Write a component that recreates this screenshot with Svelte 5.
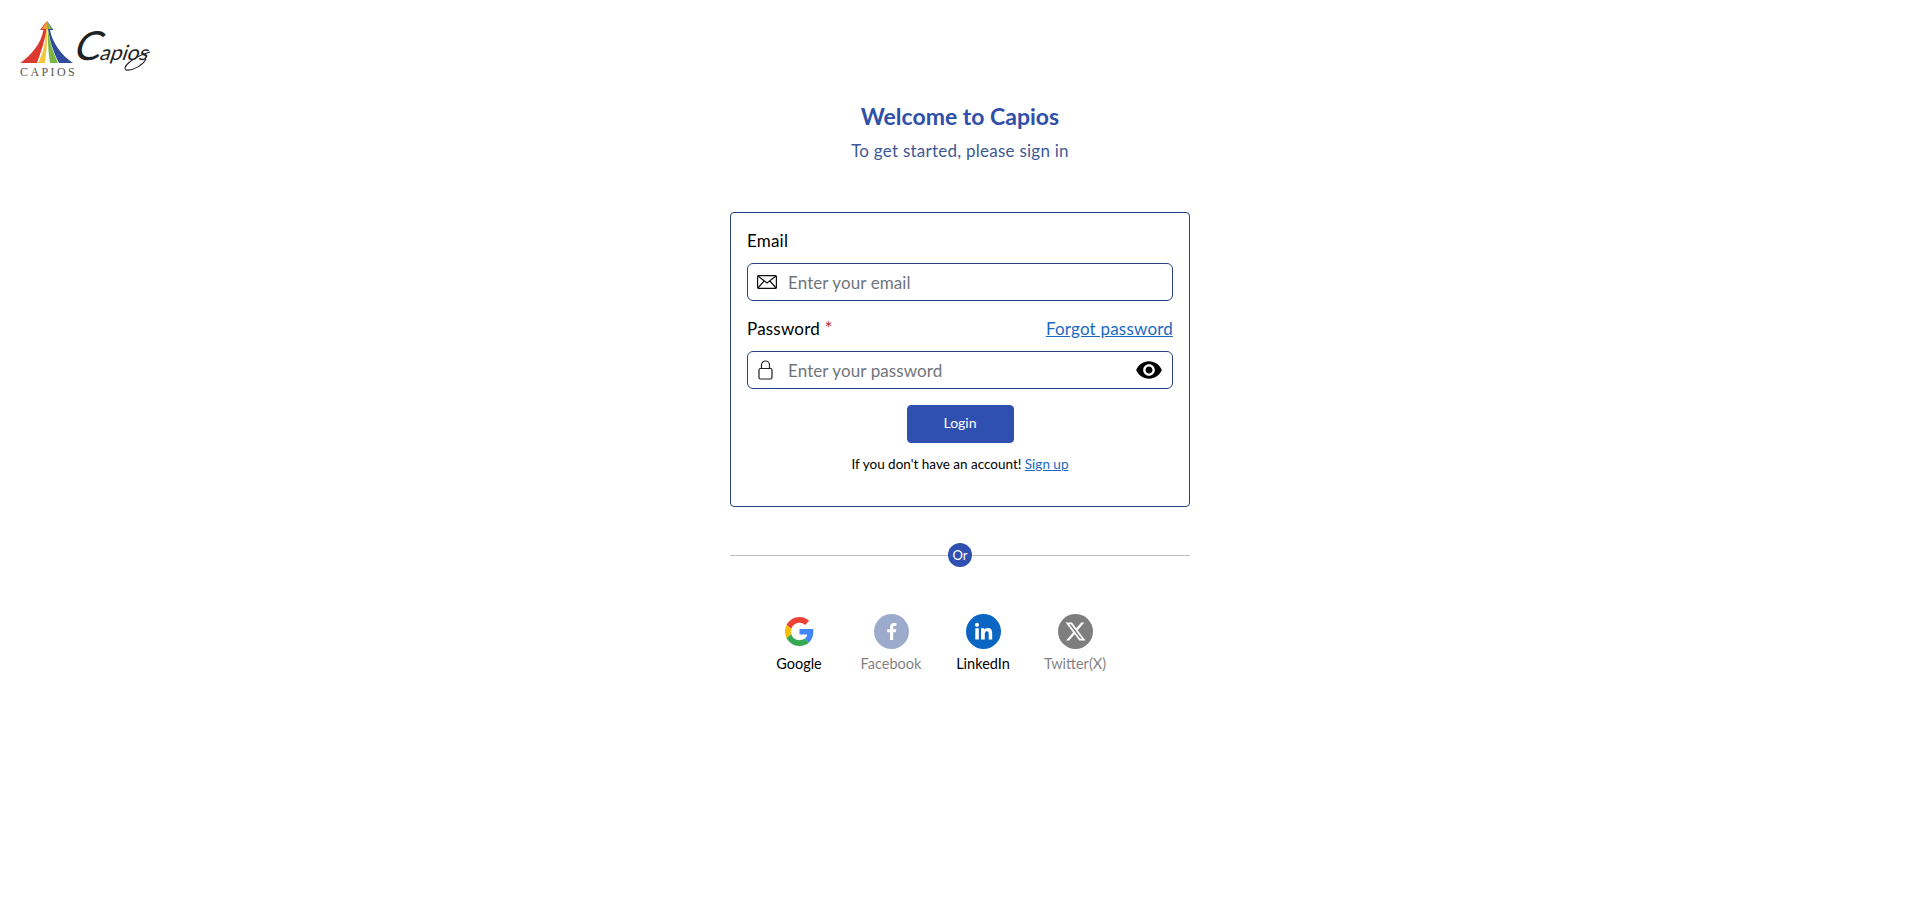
<script>
  const socials = [
    { name: 'Google', off: false },
    { name: 'Facebook', off: true },
    { name: 'LinkedIn', off: false },
    { name: 'Twitter(X)', off: true }
  ];
</script>

<div class="page">
  <header class="top">
    <svg class="logo" width="140" height="60" viewBox="0 0 140 60" aria-label="Capios">
      <path d="M29 1l6.500 9H32c2 12 11 25 23 33H41C35 32 31 18 29.500 6z" fill="#2f4b9c" />
      <path d="M29.500 6c.5 14 .5 26 2.500 37h8C35 32 31 20 29.500 6z" fill="#7db547" />
      <path d="M28 2l-6 8h3.500C23 24 13 35 2.500 43H19c4-11 8-23 9.500-33z" fill="#dc3a2e" />
      <path d="M28.500 8C28 22 25 34 20 43h7c1.500-11 2.500-23 2-35z" fill="#f5c63c" />
      <path d="M29 1l-5 8h5z" fill="#f0a030" />
      <path d="M29 1v8h5z" fill="#8fb544" />
      <text x="2" y="56" class="mark">CAPIOS</text>
      <g transform="translate(54 40) skewX(-18)">
        <text class="script"><tspan class="cap">C</tspan>apios</text>
      </g>
      <path d="M128 39c-3 6-13 12-20 11-4-2 4-12 24-18" fill="none" stroke="#222" stroke-width="1.100" />
    </svg>
  </header>

  <main class="main">
    <h1>Welcome to Capios</h1>
    <p class="sub">To get started, please sign in</p>

    <form class="card" onsubmit={(e) => e.preventDefault()}>
      <label class="label" for="email">Email</label>
      <div class="field">
        <svg class="ico" width="20" height="14" viewBox="0 0 20 14" fill="none" stroke="#111" stroke-width="1.200">
          <rect x=".6" y=".6" width="18.800" height="12.800" rx="1" />
          <path d="M1 1l9 7 9-7M1 13l6.500-7.500M19 13l-6.500-7.500" />
        </svg>
        <input id="email" type="email" placeholder="Enter your email" />
      </div>

      <div class="row">
        <label class="label" for="pw">Password <span class="req">*</span></label>
        <a href="#forgot" class="link">Forgot password</a>
      </div>
      <div class="field">
        <svg class="ico lock" width="15" height="20" viewBox="0 0 15 20" fill="none" stroke="#222" stroke-width="1.200">
          <rect x="1" y="8.500" width="13" height="10.500" rx="1.500" />
          <path d="M3.500 8.500V5a4 4 0 0 1 8 0v3.500" />
        </svg>
        <input id="pw" type="password" placeholder="Enter your password" />
        <svg class="eye" width="28" height="28" viewBox="0 0 24 24" fill="#000">
          <path d="M12 4.500C7 4.500 2.730 7.610 1 12c1.730 4.390 6 7.500 11 7.500s9.270-3.110 11-7.500c-1.730-4.390-6-7.500-11-7.500zM12 17c-2.760 0-5-2.240-5-5s2.240-5 5-5 5 2.240 5 5-2.240 5-5 5zm0-8c-1.660 0-3 1.340-3 3s1.340 3 3 3 3-1.340 3-3-1.340-3-3-3z" />
        </svg>
      </div>

      <button class="btn" type="submit">Login</button>
      <p class="signup">If you don't have an account! <a href="#signup" class="link">Sign up</a></p>
    </form>

    <div class="or"><span>Or</span></div>

    <div class="socials">
      {#each socials as s}
        <div class="social" class:off={s.off}>
          <span class="badge">
            {#if s.name === 'Google'}
              <svg width="29" height="29" viewBox="0 0 48 48">
                <path fill="#EA4335" d="M24 9.500c3.540 0 6.710 1.220 9.210 3.600l6.850-6.850C35.900 2.380 30.470 0 24 0 14.620 0 6.510 5.380 2.560 13.220l7.980 6.190C12.430 13.720 17.740 9.500 24 9.500z" />
                <path fill="#4285F4" d="M46.980 24.550c0-1.570-.15-3.090-.38-4.550H24v9.020h12.940c-.58 2.960-2.260 5.480-4.780 7.180l7.730 6c4.510-4.180 7.090-10.360 7.090-17.650z" />
                <path fill="#FBBC05" d="M10.530 28.590c-.48-1.450-.76-2.990-.76-4.590s.27-3.140.76-4.590l-7.980-6.190C.92 16.460 0 20.120 0 24c0 3.880.92 7.540 2.560 10.780l7.970-6.190z" />
                <path fill="#34A853" d="M24 48c6.480 0 11.930-2.130 15.890-5.810l-7.730-6c-2.150 1.450-4.920 2.300-8.160 2.300-6.260 0-11.570-4.220-13.470-9.910l-7.980 6.190C6.510 42.620 14.620 48 24 48z" />
              </svg>
            {:else if s.name === 'Facebook'}
              <svg width="35" height="35" viewBox="0 0 35 35">
                <circle cx="17.500" cy="17.500" r="17.500" fill="#3b5998" />
                <path fill="#fff" d="M19.200 26v-7.700h2.700l.4-3h-3.100v-1.900c0-.9.300-1.500 1.500-1.500h1.700V9.200c-.3 0-1.300-.1-2.400-.1-2.400 0-4 1.400-4 4.100v2.100h-2.700v3h2.700V26z" />
              </svg>
            {:else if s.name === 'LinkedIn'}
              <svg width="35" height="35" viewBox="0 0 35 35">
                <circle cx="17.500" cy="17.500" r="17.500" fill="#0a66c2" />
                <path fill="#fff" d="M9.300 14.200h3.500V25.500H9.300zM11 8.800a2 2 0 1 1 0 4.100 2 2 0 0 1 0-4.100zM15 14.200h3.300v1.600c.5-.9 1.700-1.900 3.500-1.900 3.700 0 4.400 2.400 4.400 5.600v6h-3.500v-5.300c0-1.300 0-2.900-1.800-2.900s-2.100 1.400-2.100 2.800v5.400H15z" />
              </svg>
            {:else}
              <svg width="35" height="35" viewBox="0 0 35 35">
                <circle cx="17.500" cy="17.500" r="17.500" fill="#000" />
                <g transform="translate(6.500 6.500) scale(.92)">
                  <path fill="#fff" d="M18.244 2.250h3.308l-7.227 8.260 8.502 11.240H16.170l-5.214-6.817L4.990 21.750H1.680l7.730-8.835L1.254 2.250H8.080l4.713 6.231zm-1.161 17.520h1.833L7.084 4.126H5.117z" />
                </g>
              </svg>
            {/if}
          </span>
          <span class="name">{s.name}</span>
        </div>
      {/each}
    </div>
  </main>
</div>

<style>
  :global(body) {
    margin: 0;
    background: #fff;
    font-family: Lato, "Noto Sans", sans-serif;
  }
  .page {
    height: 905px;
    overflow: hidden;
  }
  .top {
    height: 100px;
    padding: 20px 0 0 18px;
    box-sizing: border-box;
  }
  .logo {
    display: block;
  }
  .mark {
    font: 400 12px "Liberation Serif", serif;
    letter-spacing: 2.400px;
    fill: #555;
  }
  .script {
    font: 400 21px Lato, sans-serif;
    fill: #222;
    letter-spacing: 0;
  }
  .cap {
    font-size: 40px;
  }
  .main {
    display: flex;
    flex-direction: column;
    align-items: center;
  }
  h1 {
    margin: 0;
    font-size: 23px;
    line-height: 32px;
    font-weight: 700;
    color: #2f4fa8;
  }
  .sub {
    margin: 7px 0 0;
    font-size: 17px;
    line-height: 24px;
    letter-spacing: 0.250px;
    color: #3d5a94;
  }
  .card {
    box-sizing: border-box;
    width: 460px;
    height: 295px;
    margin-top: 49px;
    padding: 16px 16px 0;
    border: 1px solid #25427f;
    border-radius: 4px;
    display: flex;
    flex-direction: column;
  }
  .label {
    font-size: 17px;
    line-height: 24px;
    letter-spacing: 0.200px;
    color: #000;
    font-weight: 400;
  }
  .field {
    height: 38px;
    box-sizing: border-box;
    border: 1px solid #25427f;
    border-radius: 6px;
    margin-top: 10px;
    display: flex;
    align-items: center;
    padding: 0 9px;
    flex: none;
  }
  .ico {
    flex: none;
    width: 20px;
    margin-right: 11px;
  }
  .lock {
    width: 15px;
    margin-left: 1px;
    margin-right: 15px;
  }
  input {
    flex: 1;
    min-width: 0;
    border: 0;
    outline: 0;
    padding: 0;
    font: 17px Lato, "Noto Sans", sans-serif;
    letter-spacing: 0.100px;
    background: transparent;
  }
  input::placeholder {
    color: #70757b;
    opacity: 1;
  }
  .eye {
    flex: none;
  }
  .row {
    display: flex;
    justify-content: space-between;
    align-items: center;
    height: 24px;
    margin-top: 16px;
  }
  .req {
    color: #b5313f;
    font-size: 19px;
    line-height: 1;
  }
  .link {
    color: #1b6ac0;
    text-decoration: underline;
  }
  .row .link {
    font-size: 17px;
    line-height: 24px;
    letter-spacing: 0.200px;
  }
  .btn {
    width: 107px;
    height: 38px;
    align-self: center;
    margin-top: 16px;
    background: #2f50b0;
    color: #fff;
    border: 1px solid #2f50b0;
    border-radius: 4px;
    font: 14px/1 Lato, "Noto Sans", sans-serif;
    padding: 0 0 2px;
    flex: none;
  }
  .signup {
    margin: 11px 0 0;
    text-align: center;
    font-size: 13.500px;
    line-height: 20px;
    color: #000;
  }
  .or {
    width: 460px;
    height: 24px;
    margin-top: 36px;
    display: flex;
    align-items: center;
    justify-content: center;
    background: linear-gradient(#bdbdbd, #bdbdbd) center / 100% 1px no-repeat;
  }
  .or span {
    width: 24px;
    height: 24px;
    border-radius: 50%;
    background: #2f50b0;
    color: #fff;
    font-size: 13px;
    line-height: 24px;
    text-align: center;
  }
  .socials {
    display: flex;
    justify-content: center;
    margin: 47px 46px 0 0;
  }
  .social {
    width: 92px;
    display: flex;
    flex-direction: column;
    align-items: center;
    font-size: 14.500px;
    color: #000;
  }
  .off {
    opacity: 0.5;
  }
  .badge {
    width: 35px;
    height: 35px;
    display: flex;
    align-items: center;
    justify-content: center;
  }
  .name {
    margin-top: 5px;
    line-height: 20px;
  }
</style>
